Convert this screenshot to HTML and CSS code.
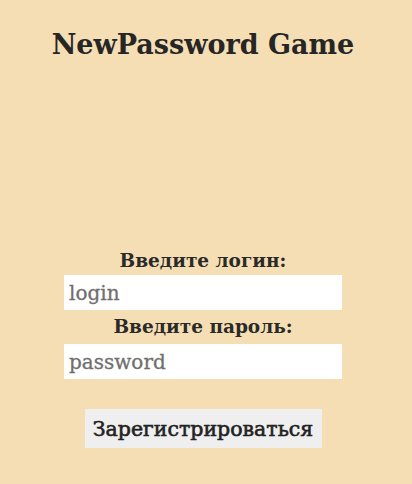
FILE: index.html
```html
<!DOCTYPE html>
<html lang="ru">
<head>
<meta charset="utf-8">
<title>NewPassword Game</title>
<link rel="stylesheet" href="styles.css">
</head>
<body>
<div class="page">
  <h1 class="title">NewPassword Game</h1>
  <form class="form">
    <label class="label" for="login">Введите логин:</label>
    <input class="field" id="login" type="text" placeholder="login">
    <label class="label label-second" for="password">Введите пароль:</label>
    <input class="field" id="password" type="password" placeholder="password">
    <button class="button" type="button">Зарегистрироваться</button>
  </form>
</div>
</body>
</html>
```
FILE: styles.css
```css
html, body {
  margin: 0;
  padding: 0;
  background: #f5deb3;
}
body {
  font-family: "DejaVu Serif", "Liberation Serif", serif;
  color: #222;
  height: 484px;
}
.page {
  display: flex;
  flex-direction: column;
  align-items: center;
  padding-right: 6px;
}
.title {
  margin: 27px 0 0 0;
  font-size: 27px;
  line-height: 36px;
  font-weight: bold;
  color: #262626;
}
.form {
  display: flex;
  flex-direction: column;
  align-items: center;
  margin-top: 187px;
}
.label {
  font-size: 18.5px;
  line-height: 22px;
  font-weight: bold;
  color: #2a2a2a;
  margin-bottom: 3px;
}
.label-second {
  margin-top: 6px;
  margin-bottom: 6px;
}
.field {
  box-sizing: border-box;
  width: 278px;
  height: 35px;
  border: none;
  outline: none;
  background: #fff;
  padding: 0 5px;
  font-family: "DejaVu Serif", "Liberation Serif", serif;
  font-size: 20px;
  color: #222;
}
.field::placeholder {
  color: #6f6f6f;
  -webkit-text-stroke: 0.3px #6f6f6f;
}
.button {
  margin-top: 30px;
  width: 237px;
  height: 39px;
  border: none;
  background: #efefef;
  font-family: "DejaVu Serif", "Liberation Serif", serif;
  font-size: 20.5px;
  -webkit-text-stroke: 0.6px #222;
  color: #222;
  padding: 0;
}
```
